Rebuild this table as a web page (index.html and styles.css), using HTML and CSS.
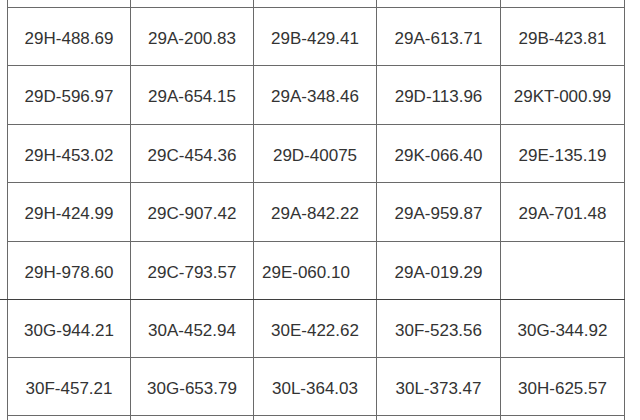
FILE: index.html
```html
<!DOCTYPE html>
<html>
<head>
<meta charset="utf-8">
<link rel="stylesheet" href="styles.css">
</head>
<body>
<div class="page">
  <div class="grid grid-top">
    <div class="cell partial"></div><div class="cell partial"></div><div class="cell partial"></div><div class="cell partial"></div><div class="cell partial"></div>

    <div class="cell h57">29H-488.69</div><div class="cell h57">29A-200.83</div><div class="cell h57">29B-429.41</div><div class="cell h57">29A-613.71</div><div class="cell h57">29B-423.81</div>

    <div class="cell h58">29D-596.97</div><div class="cell h58">29A-654.15</div><div class="cell h58">29A-348.46</div><div class="cell h58">29D-113.96</div><div class="cell h58">29KT-000.99</div>

    <div class="cell h57">29H-453.02</div><div class="cell h57">29C-454.36</div><div class="cell h57">29D-40075</div><div class="cell h57">29K-066.40</div><div class="cell h57">29E-135.19</div>

    <div class="cell h58">29H-424.99</div><div class="cell h58">29C-907.42</div><div class="cell h58">29A-842.22</div><div class="cell h58">29A-959.87</div><div class="cell h58">29A-701.48</div>

    <div class="cell h57">29H-978.60</div><div class="cell h57">29C-793.57</div><div class="cell h57 left">29E-060.10</div><div class="cell h57">29A-019.29</div><div class="cell h57"></div>
  </div>
  <div class="separator"></div>
  <div class="grid grid-bottom">
    <div class="cell h57">30G-944.21</div><div class="cell h57">30A-452.94</div><div class="cell h57">30E-422.62</div><div class="cell h57">30F-523.56</div><div class="cell h57">30G-344.92</div>

    <div class="cell h57">30F-457.21</div><div class="cell h57">30G-653.79</div><div class="cell h57">30L-364.03</div><div class="cell h57">30L-373.47</div><div class="cell h57">30H-625.57</div>

    <div class="cell h57"></div><div class="cell h57"></div><div class="cell h57"></div><div class="cell h57"></div><div class="cell h57"></div>
  </div>
</div>
</body>
</html>
```

FILE: styles.css
```css
html, body {
  margin: 0;
  padding: 0;
  background: #ffffff;
  overflow: hidden;
}

.page {
  width: 640px;
  height: 420px;
  overflow: hidden;
  font-family: "Liberation Sans", Arial, sans-serif;
  font-size: 17px;
  color: #333333;
}

.grid {
  display: grid;
  grid-template-columns: 122px 122px 122px 123px 123px;
  column-gap: 1px;
  row-gap: 1px;
  width: 616px;
  padding: 0 1px;
  margin-left: 7px;
  background: #6a6a6a;
}

.grid-bottom {
  padding-bottom: 0;
}

.separator {
  width: 625px;
  height: 1px;
  background: #3f3f3f;
}

.cell {
  background: #ffffff;
  display: flex;
  align-items: center;
  justify-content: center;
  padding-top: 4px;
  box-sizing: border-box;
  white-space: nowrap;
}

.partial {
  height: 7px;
  padding: 0;
}

.h57 {
  height: 57px;
}

.h58 {
  height: 58px;
}

.left {
  justify-content: flex-start;
  padding-left: 8px;
}
```
